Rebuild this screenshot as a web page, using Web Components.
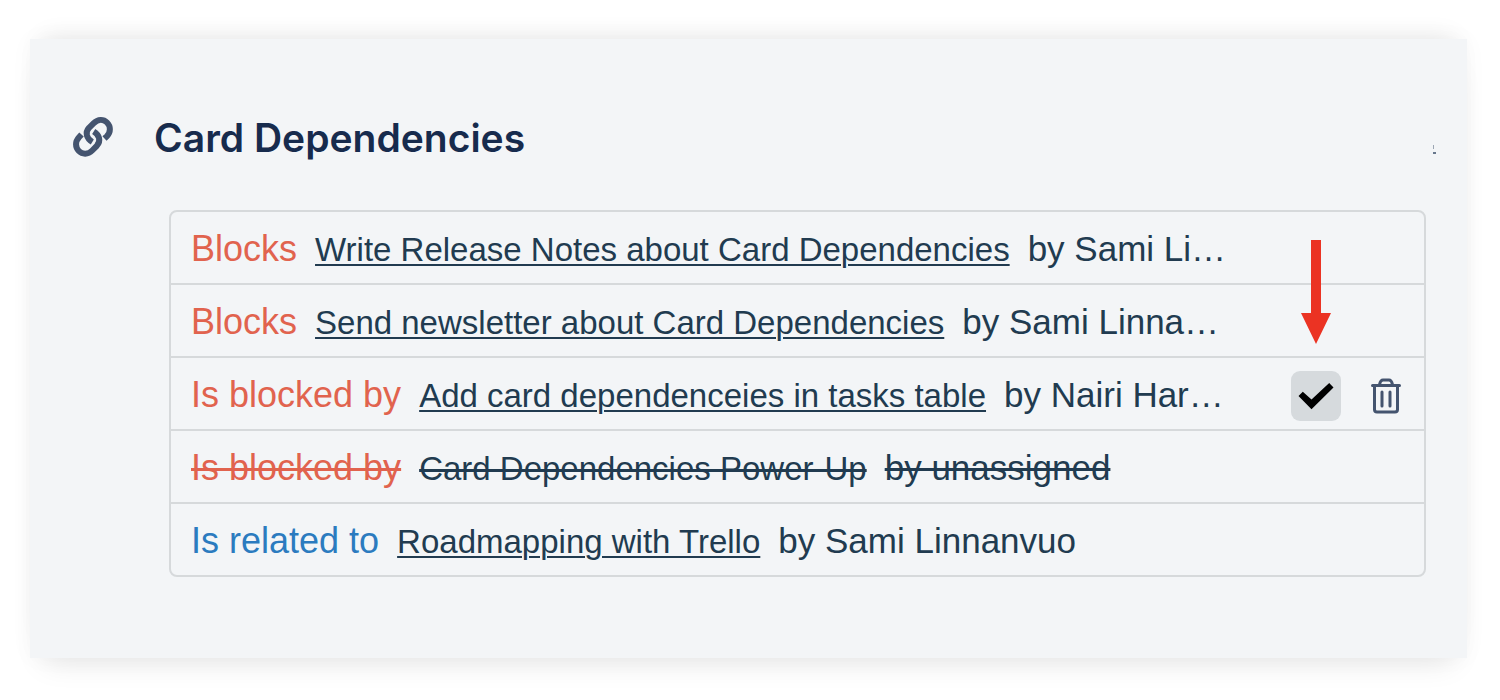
<!DOCTYPE html>
<html lang="en">
<head>
<meta charset="utf-8">
<meta name="viewport" content="width=device-width, initial-scale=1">
<title>Card Dependencies</title>
<style>
  body { margin: 0; background: #fff; font-family: "Liberation Sans", Arial, sans-serif; color: #213b50; }
</style>
</head>
<body>
<dependency-panel heading="Card Dependencies">
  <dependency-row kind="blocks" card="Write Release Notes about Card Dependencies" owner="Sami Li…">Blocks</dependency-row>
  <dependency-row kind="blocks" card="Send newsletter about Card Dependencies" owner="Sami Linna…">Blocks</dependency-row>
  <dependency-row kind="blocks" card="Add card dependenceies in tasks table" owner="Nairi Har…" actions>Is blocked by</dependency-row>
  <dependency-row kind="blocks" card="Card Dependencies Power-Up" owner="unassigned" done>Is blocked by</dependency-row>
  <dependency-row kind="related" card="Roadmapping with Trello" owner="Sami Linnanvuo">Is related to</dependency-row>
</dependency-panel>

<template id="panel-template">
  <style>
    :host { display: block; padding: 39px 33px 42px 30px; }
    section {
      box-sizing: border-box; padding: 72px 41px 81px 42px; background: #f3f5f7;
      box-shadow: 0 -14px 24px -14px rgba(0,0,0,.1), 0 18px 28px -14px rgba(0,0,0,.1), 0 0 24px rgba(0,0,0,.03);
    }
    header { display: flex; align-items: center; gap: 40px; height: 52px; }
    header svg { flex: none; }
    h2 { flex: 1; margin: 0; padding-top: 2px; font: 600 39px/52px Inter, sans-serif; color: #172b4d; }
    .mark { margin: 24px -11px 0 0; }
    .list { margin: 47px 0 0 97px; border: 2px solid #d6d9db; border-radius: 8px; }
  </style>
  <section>
    <header>
      <svg width="42" height="42" viewBox="0 0 42 42" fill="none" stroke="#44546f" stroke-width="6" stroke-linejoin="round" aria-hidden="true">
        <path d="M20.300 26C14.500 22.500 12.800 16.500 17 11.800L21.500 7.300C26 2.800 31.500 3 35 6.500C38.700 10.200 39 16 34.800 20.300L32.500 22.500"/>
        <path d="M9.500 18.500L7 21.200C3 25.500 3.200 31.300 6.800 35C10.300 38.500 16 38.700 20.200 34.500L24.800 29.800C29.200 25 27.500 19 21.700 15.500"/>
      </svg>
      <h2></h2>
      <svg class="mark" width="5" height="11" viewBox="0 0 5 11" aria-hidden="true"><path fill="#9ca6b3" d="M1 1h1v4H1z"/><path fill="#68788d" d="M1 8h3v2H1z"/></svg>
    </header>
    <div class="list" role="list"><slot></slot></div>
  </section>
</template>

<template id="row-template">
  <style>
    :host { display: block; border-bottom: 2px solid #d6d9db; }
    :host(:last-child) { border-bottom: 0; }
    .row { display: flex; align-items: center; box-sizing: border-box; height: 71px; padding: 4px 13px 0 20px; }
    .text { flex: 1; display: flex; align-items: baseline; gap: 18px; min-width: 0; white-space: nowrap; font-size: 36px; line-height: 44px; }
    .kind { color: #e1634e; }
    :host([kind="related"]) .kind { color: #2b7bbf; }
    a { color: inherit; font-size: 33px; text-decoration: underline 2px; text-underline-offset: 3px; }
    .owner { font-size: 35px; }
    :host([done]) .text > * { text-decoration: line-through 3px; }
    .actions { display: flex; gap: 20px; }
    :host(:not([actions])) .actions { display: none; }
    button { position: relative; display: grid; place-items: center; width: 50px; height: 50px; padding: 0; border: 0; border-radius: 9px; background: none; }
    .check { background: #d6dadd; }
    .arrow { position: absolute; left: 10px; bottom: 77px; pointer-events: none; }
  </style>
  <div class="row">
    <div class="text"><span class="kind"><slot></slot></span><a href="#"></a><span class="owner"></span></div>
    <div class="actions">
      <button class="check" type="button" aria-label="Mark as complete">
        <svg width="36" height="28" viewBox="0 0 36 28" aria-hidden="true"><path fill="#000" d="M.5 14L4.800 9.700L13.500 17.600L31.200 1L35.500 5.400L13.500 27.200Z"/></svg>
        <svg class="arrow" width="30" height="104" viewBox="0 0 30 104" aria-hidden="true"><path fill="#eb3323" d="M10 0H20V73H30L15 104L0 73H10Z"/></svg>
      </button>
      <button type="button" aria-label="Delete dependency">
        <svg width="30" height="36" viewBox="0 0 30 36" fill="none" stroke="#44546f" stroke-width="3" stroke-linecap="round" aria-hidden="true">
          <path d="M1.500 7.500H28.500M3.500 8V31.500Q3.500 34 6 34H24Q26.500 34 26.500 31.500V8M8.500 6.500Q9.500 2 12 2H18Q20.500 2 21.500 6.500M11 14V28M19 14V28"/>
        </svg>
      </button>
    </div>
  </div>
</template>

<script>
  class DependencyPanel extends HTMLElement {
    constructor() {
      super();
      this.attachShadow({ mode: "open" }).append(document.getElementById("panel-template").content.cloneNode(true));
    }
    connectedCallback() {
      this.shadowRoot.querySelector("h2").textContent = this.getAttribute("heading");
    }
  }
  class DependencyRow extends HTMLElement {
    constructor() {
      super();
      this.attachShadow({ mode: "open" }).append(document.getElementById("row-template").content.cloneNode(true));
    }
    connectedCallback() {
      this.setAttribute("role", "listitem");
      this.shadowRoot.querySelector("a").textContent = this.getAttribute("card");
      this.shadowRoot.querySelector(".owner").textContent = "by " + this.getAttribute("owner");
    }
  }
  customElements.define("dependency-panel", DependencyPanel);
  customElements.define("dependency-row", DependencyRow);
</script>
</body>
</html>
